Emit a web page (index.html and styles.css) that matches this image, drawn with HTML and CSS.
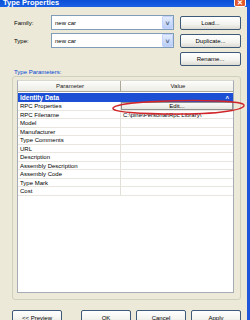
FILE: index.html
```html
<!DOCTYPE html>
<html>
<head>
    <title>Type Properties</title>
    <meta name="viewport" content="width=device-width, initial-scale=1.0">
    <link rel="stylesheet" href="styles.css">
</head>
<body>
    <!-- Title bar -->
    <div class="titlebar">
        <span class="title">Type Properties</span>
        <span class="close">&#x2715;</span>
    </div>

    <div class="dialog">
        <!-- Family / Type selectors -->
        <div class="selectors">
            <label class="field-label">Family:</label>
            <div class="combo"><span>new car</span><span class="drop">&#x2C5;</span></div>
            <button class="btn">Load...</button>

            <label class="field-label">Type:</label>
            <div class="combo"><span>new car</span><span class="drop">&#x2C5;</span></div>
            <button class="btn">Duplicate...</button>

            <span></span>
            <span></span>
            <button class="btn">Rename...</button>
        </div>

        <!-- Type Parameters group -->
        <div class="group-label">Type Parameters:</div>
        <div class="group">
            <div class="params">
                <div class="row head">
                    <div class="cell">Parameter</div>
                    <div class="cell">Value</div>
                </div>
                <div class="section">
                    <span>Identity Data</span>
                    <span class="collapse">&#x02C4;</span>
                </div>
                <div class="row">
                    <div class="cell">RPC Properties</div>
                    <div class="cell"><span class="edit">Edit...</span></div>
                </div>
                <div class="row">
                    <div class="cell">RPC Filename</div>
                    <div class="cell">C:\pine\Personal\Rpc Library\</div>
                </div>
                <div class="row"><div class="cell">Model</div><div class="cell"></div></div>
                <div class="row"><div class="cell">Manufacturer</div><div class="cell"></div></div>
                <div class="row"><div class="cell">Type Comments</div><div class="cell"></div></div>
                <div class="row"><div class="cell">URL</div><div class="cell"></div></div>
                <div class="row"><div class="cell">Description</div><div class="cell"></div></div>
                <div class="row"><div class="cell">Assembly Description</div><div class="cell"></div></div>
                <div class="row"><div class="cell">Assembly Code</div><div class="cell"></div></div>
                <div class="row"><div class="cell">Type Mark</div><div class="cell"></div></div>
                <div class="row"><div class="cell">Cost</div><div class="cell"></div></div>
            </div>
        </div>

        <!-- Dialog buttons -->
        <div class="footer">
            <button class="btn">&lt;&lt; Preview</button>
            <button class="btn ok">OK</button>
            <button class="btn">Cancel</button>
            <button class="btn">Apply</button>
        </div>
    </div>

    <!-- hand-drawn highlight round the Edit button -->
    <svg class="circle" width="140" height="20" viewBox="0 0 140 20">
        <path d="M4 11 C 10 3, 120 1, 134 7 C 140 11, 120 17, 70 17 C 30 17, 2 15, 4 11 Z"
              fill="none" stroke="#d0262a" stroke-width="1.4"/>
    </svg>
</body>
</html>
```

FILE: styles.css
```css
body {
    margin: 0;
    width: 250px;
    height: 320px;
    overflow: hidden;
    position: relative;
    font-family: "Liberation Sans", Arial, sans-serif;
    font-size: 6px;
    color: #000;
    background: #ece9d8;
}

.titlebar {
    height: 7px;
    overflow: hidden;
    display: flex;
    justify-content: space-between;
    background: linear-gradient(#0b4fd6, #1a5fe4);
}
.title {
    color: #fff;
    font-weight: bold;
    font-size: 7.5px;
    line-height: 7px;
    margin-top: -1px;
    padding-left: 3px;
}
.close {
    width: 12px;
    height: 12px;
    margin-top: -5px;
    margin-right: 4px;
    box-sizing: border-box;
    border: 1px solid #fff;
    border-radius: 2px;
    background: #e1582e;
    color: #fff;
    font-size: 7px;
    font-weight: bold;
    text-align: center;
    line-height: 14px;
}

.dialog {
    height: 313px;
    box-sizing: border-box;
    padding: 8px 0 0 12px;
    border-right: 3px solid #1f55da;
}

/* family / type rows */
.selectors {
    display: grid;
    grid-template-columns: 33px 123px 61px;
    grid-auto-rows: 15px;
    gap: 3px 6px;
    align-items: center;
}
.field-label {
    padding-left: 2px;
}
.combo {
    height: 15px;
    box-sizing: border-box;
    border: 1px solid #7f9db9;
    background: #fff;
    display: flex;
    align-items: center;
    justify-content: space-between;
    padding-left: 3px;
}
.drop {
    width: 11px;
    height: 13px;
    box-sizing: border-box;
    background: linear-gradient(#e3ecfd, #b9cdf6);
    border: 1px solid #c3d3fd;
    border-radius: 1px;
    color: #4d6185;
    font-size: 7px;
    font-weight: bold;
    text-align: center;
    line-height: 13px;
}

.btn {
    height: 14px;
    padding: 0;
    box-sizing: border-box;
    font-family: inherit;
    font-size: 6px;
    color: #000;
    border: 1px solid #3d5a78;
    border-radius: 2px;
    background: linear-gradient(#ffffff, #f3f3ef 60%, #dcdad2);
}

/* group box */
.group-label {
    margin-top: 3px;
    padding-left: 2px;
    line-height: 6px;
    color: #0046d5;
}
.group {
    width: 229px;
    height: 224px;
    margin-top: 1px;
    box-sizing: border-box;
    padding: 3px 6px 6px 4px;
    border: 1px solid #d0d0bf;
    border-radius: 3px;
}
.params {
    height: 213px;
    box-sizing: border-box;
    background: #fff;
    border: 1px solid #a5acb5;
    border-top-color: #d8d8d0;
}
.row {
    display: grid;
    grid-template-columns: 103px 1fr;
    height: 8.5px;
}
.cell {
    padding-left: 2px;
    line-height: 8px;
    white-space: nowrap;
    overflow: hidden;
    border-right: 1px solid #e2e0d8;
    border-bottom: 1px solid #e8e6df;
}
.cell:last-child {
    border-right: none;
}
.row.head {
    height: 11px;
    background: linear-gradient(#fdfdfb, #ebeae3);
}
.row.head .cell {
    text-align: center;
    line-height: 10px;
    color: #222;
    border-right: 1px solid #aca899;
    border-bottom: 1px solid #aca899;
}
.row.head .cell:last-child {
    border-right: none;
}
.section {
    height: 9px;
    margin-top: 1px;
    display: flex;
    justify-content: space-between;
    align-items: center;
    padding: 0 4px 0 2px;
    background: #1c4fd4;
    color: #fff;
    font-weight: bold;
    font-size: 6.5px;
}
.collapse {
    font-size: 6px;
    line-height: 4px;
}
.edit {
    display: block;
    margin-left: -2px;
    height: 8px;
    box-sizing: border-box;
    border: 1px solid #8e8f8f;
    background: linear-gradient(#fafafa, #e6e6e0);
    text-align: center;
    line-height: 6px;
}

/* bottom buttons */
.footer {
    display: flex;
    gap: 5px;
    margin-top: 10px;
}
.footer .btn {
    width: 50px;
    height: 15px;
}
.footer .ok {
    margin-left: 14px;
}

.circle {
    position: absolute;
    left: 109px;
    top: 97px;
}
```
